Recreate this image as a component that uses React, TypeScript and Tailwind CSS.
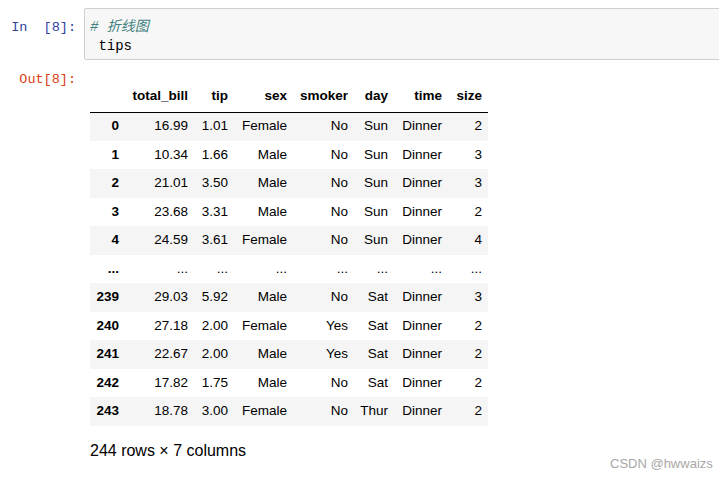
import React from "react";

const cols = ["total_bill", "tip", "sex", "smoker", "day", "time", "size"];
const widths = ["w-[35px]", "w-[69px]", "w-[40px]", "w-[59px]", "w-[61px]", "w-[40px]", "w-[54px]", "w-[40px]"];

const rows: string[][] = [
  ["0", "16.99", "1.01", "Female", "No", "Sun", "Dinner", "2"],
  ["1", "10.34", "1.66", "Male", "No", "Sun", "Dinner", "3"],
  ["2", "21.01", "3.50", "Male", "No", "Sun", "Dinner", "3"],
  ["3", "23.68", "3.31", "Male", "No", "Sun", "Dinner", "2"],
  ["4", "24.59", "3.61", "Female", "No", "Sun", "Dinner", "4"],
  ["...", "...", "...", "...", "...", "...", "...", "..."],
  ["239", "29.03", "5.92", "Male", "No", "Sat", "Dinner", "3"],
  ["240", "27.18", "2.00", "Female", "Yes", "Sat", "Dinner", "2"],
  ["241", "22.67", "2.00", "Male", "Yes", "Sat", "Dinner", "2"],
  ["242", "17.82", "1.75", "Male", "No", "Sat", "Dinner", "2"],
  ["243", "18.78", "3.00", "Female", "No", "Thur", "Dinner", "2"],
];

export default function App() {
  return (
    <div className="relative w-[719px] h-[479px] overflow-hidden bg-white">
      {/* Input cell */}
      <div className="flex pt-[8px]">
        <div
          className="w-[84px] shrink-0 pr-[8px] pt-[10px] text-right text-[13.5px] leading-[19px] h-[35px] text-[#303f9f] whitespace-pre"
          style={{ fontFamily: '"Liberation Mono", monospace' }}
        >
          {"In  [8]:"}
        </div>
        <div
          className="flex-1 mr-[-10px] rounded-l-[2px] border border-[#cfcfcf] bg-[#f7f7f7] pl-[5px] pt-[9px] pb-[3px] text-[14px] text-black whitespace-pre"
          style={{ fontFamily: '"Liberation Mono", "Noto Sans CJK SC", monospace' }}
        >
          <div className="h-[19px] leading-[19px] italic text-[#408080] overflow-visible">{"# 折线图"}</div>
          <div className="h-[19px] leading-[19px]">{" tips"}</div>
        </div>
      </div>

      {/* Output cell */}
      <div className="flex mt-[11px]">
        <div
          className="w-[84px] shrink-0 pr-[8px] text-right text-[13.5px] leading-[17px] text-[#d84315] whitespace-pre"
          style={{ fontFamily: '"Liberation Mono", monospace' }}
        >
          {"Out[8]:"}
        </div>
        <div className="pl-[6px] pt-[12px]" style={{ fontFamily: '"Liberation Sans", Arial, sans-serif' }}>
          <table className="table-fixed border-collapse text-[13.5px] text-black w-[398px]">
            <colgroup>
              {widths.map((w, i) => (
                <col key={i} className={w} />
              ))}
            </colgroup>
            <thead>
              <tr className="h-[29px] border-b border-black">
                <th className="px-[6px] pb-[3px] text-right font-bold"></th>
                {cols.map((c) => (
                  <th key={c} className="px-[6px] pb-[3px] text-right font-bold whitespace-nowrap">
                    {c}
                  </th>
                ))}
              </tr>
            </thead>
            <tbody>
              {rows.map((r, ri) => (
                <tr key={ri} className={`h-[28.5px] ${ri % 2 === 0 ? "bg-[#f5f5f5]" : "bg-white"}`}>
                  {r.map((v, ci) => (
                    <td
                      key={ci}
                      className={`px-[6px] text-right whitespace-nowrap ${ci === 0 ? "font-bold" : ""}`}
                    >
                      {v}
                    </td>
                  ))}
                </tr>
              ))}
            </tbody>
          </table>
          <div className="mt-[16px] text-[16px] leading-[18px] text-black">244 rows × 7 columns</div>
        </div>
      </div>

      <div
        className="absolute left-[610px] top-[456px] text-[13px] leading-[16px] text-[#a8a8a8] whitespace-nowrap"
        style={{ fontFamily: '"Liberation Sans", Arial, sans-serif' }}
      >
        CSDN @hwwaizs
      </div>
    </div>
  );
}
